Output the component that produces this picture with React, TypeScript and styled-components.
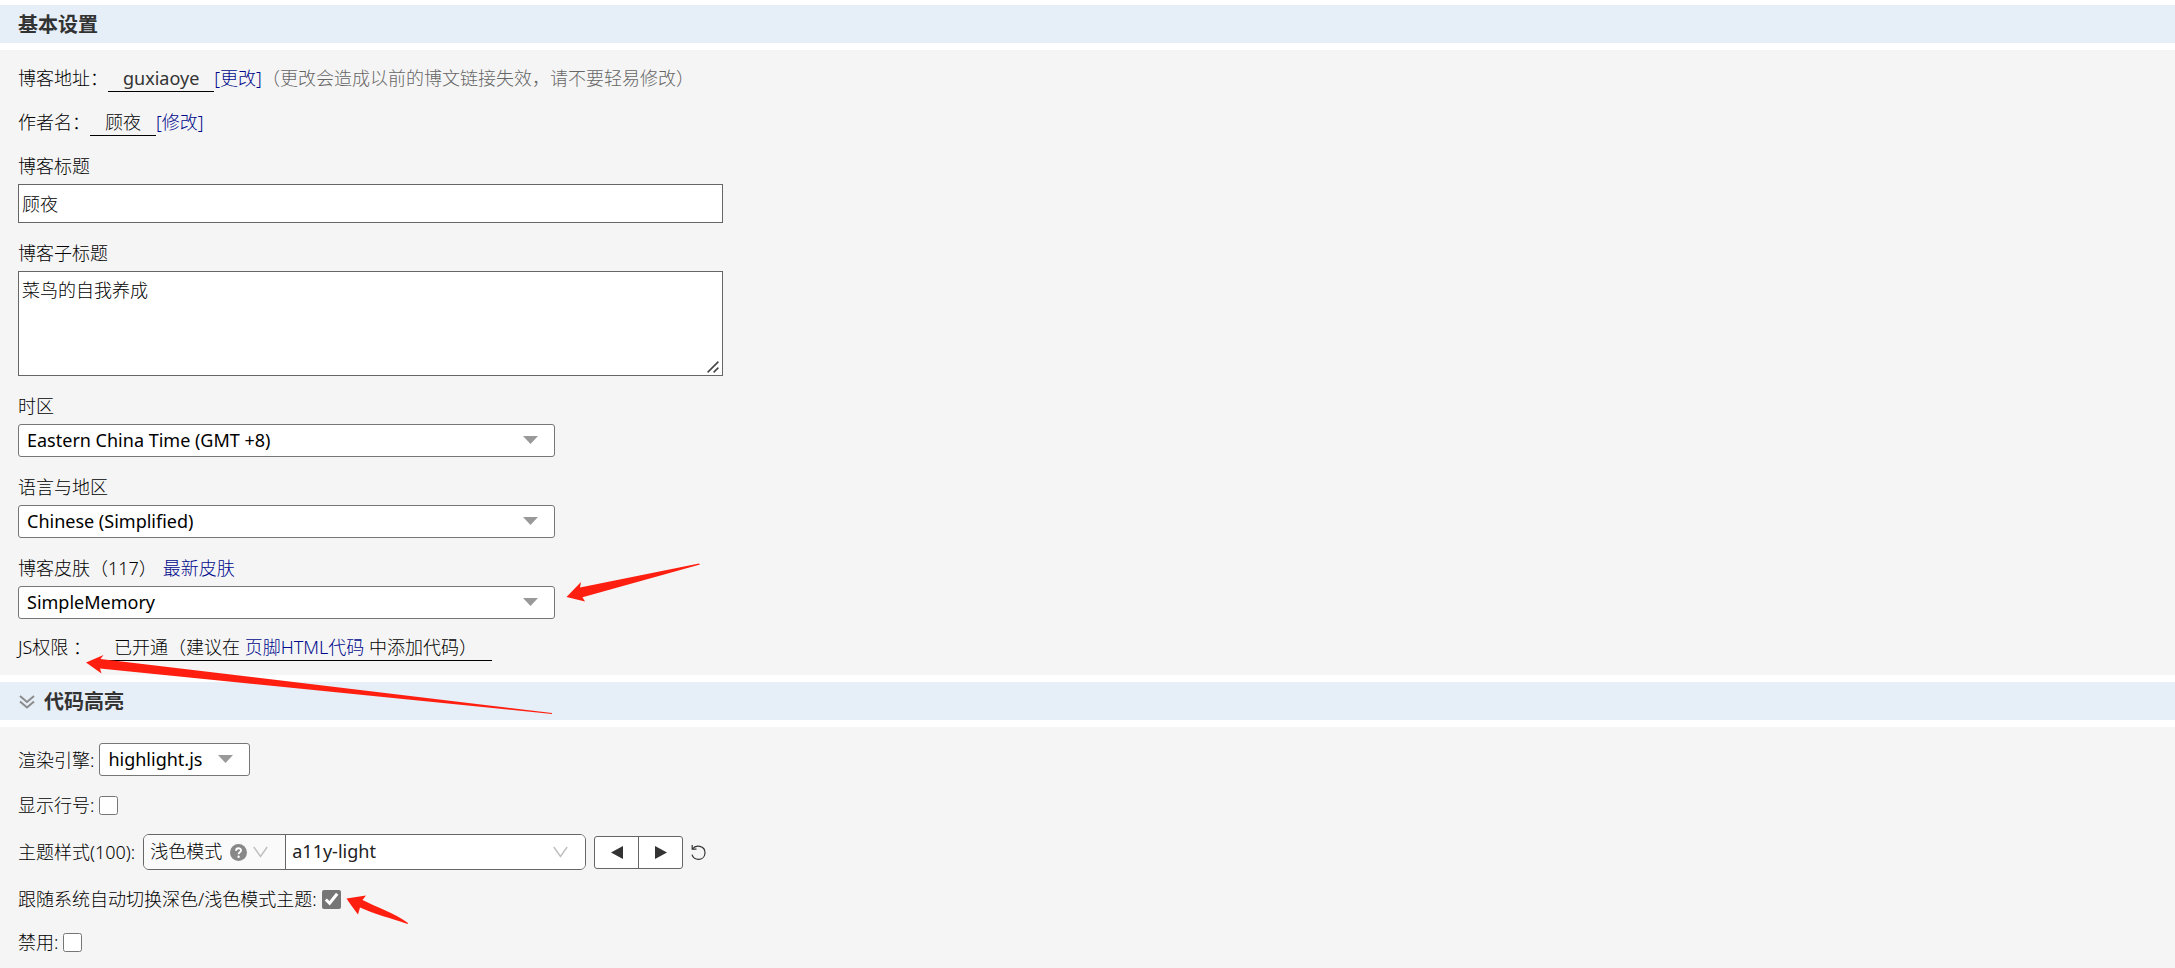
import React from "react";
import styled, { createGlobalStyle, css } from "styled-components";

const GlobalStyle = createGlobalStyle`
  *, *::before, *::after { box-sizing: border-box; }
  body {
    margin: 0;
    background: #fff;
    color: #000;
    font-family: "Noto Sans", "Noto Sans CJK SC", sans-serif;
    font-size: 18px;
    font-weight: 300;
    line-height: 24px;
  }
  button, input, select, textarea { font: inherit; color: inherit; margin: 0; }
`;

const Page = styled.main`
  display: flex;
  flex-direction: column;
  gap: 7px;
  padding-top: 5px;
`;

const SectionBar = styled.h2`
  display: flex;
  align-items: center;
  gap: 9px;
  height: 38px;
  margin: 0;
  padding: 2px 18px 0;
  background: #e6eef8;
  color: #333;
  font-size: 20px;
  font-weight: 700;
`;

const Panel = styled.section<{ $gap: number }>`
  display: flex;
  flex-direction: column;
  gap: ${(p) => p.$gap}px;
  padding: 16px 18px 14px;
  background: #f5f5f5;
`;

const Fields = styled.div`
  display: flex;
  flex-direction: column;
  gap: 18px;
`;

const InfoRow = styled.div`
  position: relative;
  display: flex;
  align-items: flex-start;
  height: 26px;
`;

const Underlined = styled.span<{ $spaced?: boolean; $latin?: boolean }>`
  height: 26px;
  margin-left: ${(p) => (p.$spaced ? 8 : 0)}px;
  padding: 0 15px;
  border-bottom: 1px solid #000;
  color: ${(p) => (p.$latin ? "#333" : "inherit")};
  font-weight: ${(p) => (p.$latin ? 400 : 300)};
  white-space: pre;
`;

const Link = styled.a`
  color: #000a8c;
  text-decoration: none;
`;

const Hint = styled.span`
  color: #666;
`;

const Field = styled.div`
  position: relative;
  display: flex;
  flex-direction: column;
  align-items: flex-start;
  gap: 6px;
`;

const LabelLine = styled.div`
  display: flex;
  gap: 6px;
`;

const boxed = css`
  width: 705px;
  max-width: 100%;
  border: 1px solid #666;
  border-radius: 0;
  background: #fff;
  outline: none;
`;

const TextInput = styled.input`
  ${boxed}
  height: 39px;
  padding: 0 3px 2px;
`;

const AreaBox = styled.div`
  display: grid;
  max-width: 100%;
  > * { grid-area: 1 / 1; }
  > svg { place-self: end; margin: 0 4px 3px 0; pointer-events: none; }
`;

const TextArea = styled.textarea`
  ${boxed}
  display: block;
  height: 105px;
  padding: 6px 3px;
  resize: both;
  &::-webkit-resizer { background: transparent; }
`;

const SelectBox = styled.div<{ $width: number }>`
  display: grid;
  align-items: center;
  width: ${(p) => p.$width}px;
  max-width: 100%;
  height: 33px;
  > * { grid-area: 1 / 1; }
  > svg { justify-self: end; margin: 0 17px 2px 0; pointer-events: none; }
`;

const Select = styled.select`
  appearance: none;
  width: 100%;
  height: 33px;
  padding: 0 8px 2px;
  border: 1px solid #767676;
  border-radius: 3px;
  background: #fff;
  color: #000;
  font-weight: 400;
`;

const FormRow = styled.div`
  position: relative;
  display: flex;
  align-items: center;
  gap: 5px;
  min-height: 28px;
`;

const CheckBox = styled.input`
  width: 19px;
  height: 19px;
  accent-color: #767676;
`;

const ThemeGroup = styled.div`
  display: flex;
  height: 36px;
  margin-left: 3px;
  border: 1px solid #666;
  border-radius: 6px;
  overflow: hidden;
  background: #fff;
`;

const ThemePart = styled.div<{ $mode?: boolean }>`
  display: grid;
  align-items: center;
  width: ${(p) => (p.$mode ? 142 : 299)}px;
  border-right: ${(p) => (p.$mode ? "1px solid #666" : "none")};
  background: ${(p) => (p.$mode ? "#fafafa" : "#fff")};
  color: ${(p) => (p.$mode ? "#000" : "#222")};
  font-weight: ${(p) => (p.$mode ? 300 : 400)};
  > * { grid-area: 1 / 1; }
`;

const PlainSelect = styled.select`
  appearance: none;
  width: 100%;
  height: 34px;
  padding: 0 6px 2px;
  border: none;
  background: transparent;
`;

const PartIcons = styled.span`
  display: flex;
  align-items: center;
  gap: 6px;
  justify-self: end;
  margin-right: 17px;
  pointer-events: none;
`;

const StepGroup = styled.div`
  display: flex;
  height: 33px;
  margin-left: 3px;
  border: 1px solid #666;
  border-radius: 3px;
  background: #fff;
`;

const StepButton = styled.button`
  display: flex;
  align-items: center;
  justify-content: center;
  width: 43px;
  padding: 0;
  border: none;
  background: none;
  & + & { width: 44px; border-left: 1px solid #666; }
`;

const ResetButton = styled.button`
  display: flex;
  margin-left: 3px;
  padding: 0;
  border: none;
  background: none;
`;

const Mark = styled.svg<{ $left: number; $top: number }>`
  position: absolute;
  left: ${(p) => p.$left}px;
  top: ${(p) => p.$top}px;
  z-index: 1;
  pointer-events: none;
  fill: #ff1f10;
`;

const Triangle = () => (
  <svg width="15" height="8" viewBox="0 0 15 8" aria-hidden="true">
    <path d="M0 0H15L7.5 8Z" fill="#999" />
  </svg>
);

const Chevron = () => (
  <svg width="15" height="12" viewBox="0 0 15 12" fill="none" stroke="#bfbfbf" strokeWidth="1.4" aria-hidden="true">
    <path d="M0.8 1L7.5 10.5L14.2 1" />
  </svg>
);

const QuestionIcon = () => (
  <svg width="17" height="17" viewBox="0 0 17 17" aria-hidden="true">
    <circle cx="8.5" cy="8.5" r="8.5" fill="#888" />
    <path d="M6 6.8C6 3.4 11 3.6 11 6.5C11 8.3 8.6 8.3 8.6 10.2" fill="none" stroke="#fff" strokeWidth="1.9" />
    <circle cx="8.6" cy="12.7" r="1.2" fill="#fff" />
  </svg>
);

const ResetIcon = () => (
  <svg width="15" height="17" viewBox="0 0 15 17" fill="none" stroke="#333" strokeWidth="1.2" aria-hidden="true">
    <path d="M1.2 1V5.2H5.5" />
    <path d="M1.4 5C3.2 2.6 6 1.8 8.8 2.4C12.2 3.2 14.2 6 14 9.2C13.7 12.7 11 15.3 7.6 15.3C4.3 15.3 1.8 13.4 1 10.6" />
  </svg>
);

const ResizeGrip = () => (
  <svg width="12" height="12" viewBox="0 0 12 12" fill="none" stroke="#444" strokeWidth="1.5" aria-hidden="true">
    <path d="M0.6 11.4L11.4 0.6M6.6 11.4L11.4 6.6" />
  </svg>
);

const ExpandIcon = () => (
  <svg width="17" height="14" viewBox="0 0 17 14" fill="none" stroke="#8c8c8c" strokeWidth="2" aria-hidden="true">
    <path d="M2 1L9 7L16 1M2 6.5L9 12.5L16 6.5" />
  </svg>
);

type PickerProps = { id: string; value: string; width?: number };

const Picker = ({ id, value, width = 537 }: PickerProps) => (
  <SelectBox $width={width}>
    <Select id={id} defaultValue={value}>
      <option>{value}</option>
    </Select>
    <Triangle />
  </SelectBox>
);

export default function App() {
  return (
    <>
      <GlobalStyle />
      <Page>
        <SectionBar>基本设置</SectionBar>
        <Panel $gap={16}>
          <Fields>
            <InfoRow>
              博客地址：<Underlined $latin>guxiaoye</Underlined>
              <Link href="#address">[更改]</Link>
              <Hint>（更改会造成以前的博文链接失效，请不要轻易修改）</Hint>
            </InfoRow>
            <InfoRow>
              作者名：<Underlined>顾夜</Underlined>
              <Link href="#author">[修改]</Link>
            </InfoRow>
            <Field>
              <label htmlFor="title">博客标题</label>
              <TextInput id="title" type="text" defaultValue="顾夜" />
            </Field>
            <Field>
              <label htmlFor="subtitle">博客子标题</label>
              <AreaBox>
                <TextArea id="subtitle" defaultValue="菜鸟的自我养成" />
                <ResizeGrip />
              </AreaBox>
            </Field>
            <Field>
              <label htmlFor="zone">时区</label>
              <Picker id="zone" value="Eastern China Time (GMT +8)" />
            </Field>
            <Field>
              <label htmlFor="locale">语言与地区</label>
              <Picker id="locale" value="Chinese (Simplified)" />
            </Field>
            <Field>
              <LabelLine>
                <label htmlFor="skin">博客皮肤（117）</label>
                <Link href="#skins">最新皮肤</Link>
              </LabelLine>
              <Picker id="skin" value="SimpleMemory" />
              <Mark $left={548} $top={6} width="134" height="40" viewBox="566 562 134 40" aria-hidden="true">
                <path d="M566.5 597L581 582L580 587.5L699 563.5L700 564.5L582.5 597.3L585 601.5Z" />
              </Mark>
            </Field>
          </Fields>
          <InfoRow>
            {"JS权限 ："}
            <Underlined $spaced>
              已开通（建议在 <Link href="#footer">页脚HTML代码</Link> 中添加代码）
            </Underlined>
            <Mark $left={68} $top={19} width="468" height="60" viewBox="86 654 468 60" aria-hidden="true">
              <path d="M86 662.5L103.5 655L100.5 659L552 713L552 714L100 668.5L101.5 673.5Z" />
            </Mark>
          </InfoRow>
        </Panel>
        <SectionBar>
          <ExpandIcon />
          代码高亮
        </SectionBar>
        <Panel $gap={15}>
          <FormRow>
            <label htmlFor="engine">渲染引擎:</label>
            <Picker id="engine" value="highlight.js" width={151} />
          </FormRow>
          <FormRow>
            <label htmlFor="lines">显示行号:</label>
            <CheckBox id="lines" type="checkbox" />
          </FormRow>
          <FormRow>
            <label htmlFor="theme">主题样式(100):</label>
            <ThemeGroup>
              <ThemePart $mode>
                <PlainSelect aria-label="模式" defaultValue="浅色模式">
                  <option>浅色模式</option>
                </PlainSelect>
                <PartIcons>
                  <QuestionIcon />
                  <Chevron />
                </PartIcons>
              </ThemePart>
              <ThemePart>
                <PlainSelect id="theme" defaultValue="a11y-light">
                  <option>a11y-light</option>
                </PlainSelect>
                <PartIcons>
                  <Chevron />
                </PartIcons>
              </ThemePart>
            </ThemeGroup>
            <StepGroup>
              <StepButton type="button" aria-label="上一个">
                <svg width="12" height="13" viewBox="0 0 12 13" aria-hidden="true">
                  <path d="M12 0V13L0 6.5Z" fill="#333" />
                </svg>
              </StepButton>
              <StepButton type="button" aria-label="下一个">
                <svg width="12" height="13" viewBox="0 0 12 13" aria-hidden="true">
                  <path d="M0 0V13L12 6.5Z" fill="#333" />
                </svg>
              </StepButton>
            </StepGroup>
            <ResetButton type="button" aria-label="重置">
              <ResetIcon />
            </ResetButton>
          </FormRow>
          <FormRow>
            <label htmlFor="follow">跟随系统自动切换深色/浅色模式主题:</label>
            <CheckBox id="follow" type="checkbox" defaultChecked />
            <Mark $left={328} $top={10} width="64" height="32" viewBox="346 896 64 32" aria-hidden="true">
              <path d="M346.5 899.5L366 896.5L362.5 901C376 908 395 914 408 924L407.5 925C390 919 374 915 360 908.5L358 915.5C354 910 350 905 346.5 899.5Z" />
            </Mark>
          </FormRow>
          <FormRow>
            <label htmlFor="disable">禁用:</label>
            <CheckBox id="disable" type="checkbox" />
          </FormRow>
        </Panel>
      </Page>
    </>
  );
}
